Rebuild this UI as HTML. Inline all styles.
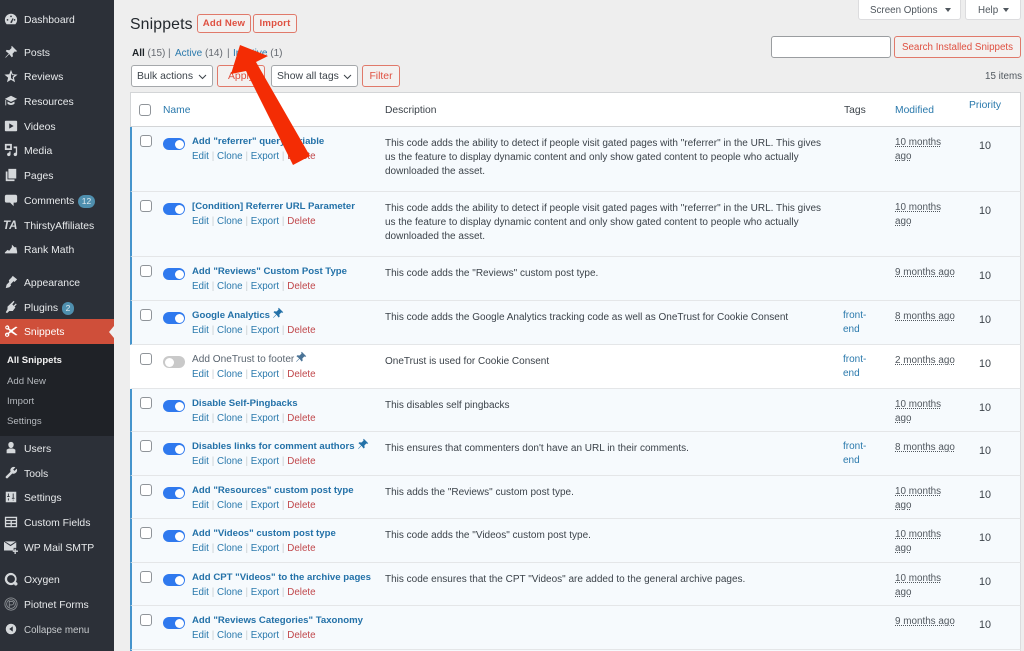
<!DOCTYPE html>
<html><head><meta charset="utf-8"><title>Snippets</title>
<style>
*{box-sizing:border-box}
html{margin:0;padding:0;height:651px;overflow:hidden;background:#eeeeee}
body{margin:0;padding:0;width:1024px;height:651px;overflow:hidden;background:#eeeeee;position:relative;font-family:"Liberation Sans",sans-serif;font-size:10px;color:#3c434a;letter-spacing:0;filter:blur(.35px)}
.a{position:absolute;white-space:nowrap}
#side{position:absolute;left:0;top:0;width:114px;height:651px;background:#2c3038}
.m{position:absolute;left:24px;color:#e8eaec;font-size:10.4px;line-height:14px;white-space:nowrap;margin-top:2px}
.s{position:absolute;left:7px;color:#b4b8bd;font-size:9.6px;line-height:14px;margin-top:4px}
.ic{position:absolute;left:4px;width:14px;height:14px;fill:#d5d8db;margin-top:0}
.bd{display:inline-block;background:#4f8fae;color:#dfeaf0;border-radius:7px;font-size:8.5px;line-height:13px;height:13px;padding:0 3.5px;margin-left:4px;vertical-align:0}
.btn{position:absolute;border:1px solid #e0796a;border-radius:3px;color:#df5040;text-align:center;background:#f3f1f0;white-space:nowrap}
.sel{position:absolute;border:1px solid #a5a8ab;border-radius:3px;background:#fff;color:#3c434a;line-height:21px;padding-left:5px;height:22px;font-size:10.4px;white-space:nowrap}
.sel svg{position:absolute;right:5px;top:8px}
.l{color:#2a79ac}
.r{position:absolute;left:130px;width:891px;background:#f6fafd;border-bottom:1px solid #e4e6e8;border-right:1px solid #dcdcde;border-left:2px solid #4594cc}
.r.off{background:#fff;border-left:2px solid #fff}
.cb{position:absolute;left:8px;top:8px;width:12px;height:12px;border:1px solid #8f9499;border-radius:3px;background:#fff}
.t{position:absolute;left:31px;top:11px;width:22px;height:12px;border-radius:6px;background:#2f79ee}
.t:after{content:"";position:absolute;right:1.5px;top:1.5px;width:9px;height:9px;border-radius:50%;background:#fff}
.off .t{background:#c9c9c9}
.off .t:after{right:auto;left:1.5px}
.n{position:absolute;left:60px;top:8px;font-weight:bold;color:#2371a8;line-height:14px;white-space:nowrap;font-size:9.6px}
.off .n{font-weight:normal;color:#5a6570;font-size:10.1px}
.ac{position:absolute;left:60px;top:23px;line-height:14px;white-space:nowrap;color:#2a79ac;font-size:9.8px}
.ac i{font-style:normal;color:#c9ced2;padding:0 2.8px}
.ac b{font-weight:normal;color:#c0474b}
.d{position:absolute;left:253px;top:10px;line-height:14px;white-space:nowrap;font-size:10px;color:#3c434a}
.tg{position:absolute;left:711px;top:8px;line-height:14px;color:#2a79ac;font-size:10px}
.mo{position:absolute;left:763px;top:9px;line-height:14px;color:#50575e;font-size:9.9px}
.mo u{text-decoration:underline dotted;text-underline-offset:1px}
.p{position:absolute;left:847px;top:12px;line-height:14px;color:#3c434a;font-size:10.8px}
.pin{position:absolute;fill:#2371a8}
.h{line-height:14px;font-size:10.3px}
</style></head>
<body>
<div id="side">
<svg class="ic" style="top:12px" viewBox="0 0 16 16"><path d="M8 2a7 7 0 0 0-7 7c0 2 .8 3.600 2 5h10c1.200-1.400 2-3 2-5a7 7 0 0 0-7-7zM8 4a1 1 0 1 1 0 2 1 1 0 0 1 0-2zM4 8a1 1 0 1 1 0 2 1 1 0 0 1 0-2zm8 0a1 1 0 1 1 0 2 1 1 0 0 1 0-2zM7 12l3-5 .8.500L9 12.500z" fill-rule="evenodd"/></svg>
<div class="m" style="top:12px">Dashboard</div>
<svg class="ic" style="top:45px" viewBox="0 0 16 16"><path d="M9 1l6 6-1.500.8-1-.6L9.800 10l.4 3-1.400 1-2.800-3.600L2 14.500 1.500 14l4-4.200L2 7l1-1.400 3 .4 2.800-2.700-.6-1z"/></svg>
<div class="m" style="top:45px">Posts</div>
<svg class="ic" style="top:69px" viewBox="0 0 16 16"><path d="M8 1l2 5 5.500.4-4.200 3.500 1.300 5.300L8 12.300 3.400 15.200l1.300-5.300L.5 6.400 6 6zM8 4.500v6l2.500 1.500-.7-2.900 2.200-1.900-2.900-.2z" fill-rule="evenodd"/></svg>
<div class="m" style="top:69px">Reviews</div>
<svg class="ic" style="top:94px" viewBox="0 0 16 16"><path d="M8 2L1 5.500 8 9l7-3.500zM4 8.500V11c1 1 2.500 1.500 4 1.500s3-.5 4-1.500V8.500L8 10.500zM1.500 6.500V13h1V7z"/></svg>
<div class="m" style="top:94px">Resources</div>
<svg class="ic" style="top:119px" viewBox="0 0 16 16"><path d="M2 2h12a1 1 0 0 1 1 1v10a1 1 0 0 1-1 1H2a1 1 0 0 1-1-1V3a1 1 0 0 1 1-1zm4 3v6l5-3z" fill-rule="evenodd"/></svg>
<div class="m" style="top:119px">Videos</div>
<svg class="ic" style="top:143px" viewBox="0 0 16 16"><path d="M1 1h8v7H1zM3 3v3h4V3zM11 4h4v9a2 2 0 1 1-1.500-1.900V6H11zM6 9.500h1.500v3.500a2 2 0 1 1-1.500-1.900z" fill-rule="evenodd"/></svg>
<div class="m" style="top:143px">Media</div>
<svg class="ic" style="top:168px" viewBox="0 0 16 16"><path d="M5 1h9v11H5zM2 4h2v9h8v2H2z"/></svg>
<div class="m" style="top:168px">Pages</div>
<svg class="ic" style="top:193px" viewBox="0 0 16 16"><path d="M3 2h10a2 2 0 0 1 2 2v5a2 2 0 0 1-2 2h-2v4l-4-4H3a2 2 0 0 1-2-2V4a2 2 0 0 1 2-2z"/></svg>
<div class="m" style="top:193px">Comments<span class="bd">12</span></div>
<div class="a" style="left:3px;top:219px;font:italic bold 11.5px/14px 'Liberation Sans',sans-serif;color:#d5d8db">TA</div>
<div class="m" style="top:218px">ThirstyAffiliates</div>
<svg class="ic" style="top:242px" viewBox="0 0 16 16"><path d="M1 12l3-3 2 1 3-4v-3l3 3 2 0 1 5 0 2H1z"/></svg>
<div class="m" style="top:242px">Rank Math</div>
<svg class="ic" style="top:275px" viewBox="0 0 16 16"><path d="M10 1l5 4-3 3-1-1-1 1-2.500 2.500L8 12l-2 2-4 1 1-4 3-3-.500-2 3-3z"/></svg>
<div class="m" style="top:275px">Appearance</div>
<svg class="ic" style="top:300px" viewBox="0 0 16 16"><path d="M11 1l1 1-2.500 3L11 6.500 13.500 4l1 1L12 7.500l1 1-3 4H6L3.500 15 2 14l2-3.500V7.500z"/></svg>
<div class="m" style="top:300px">Plugins<span class="bd">2</span></div>
<div style="position:absolute;left:0;top:319px;width:114px;height:25px;background:#cf4f3a"></div>
<div style="position:absolute;left:109px;top:326px;border:6px solid transparent;border-left:0;border-right:5px solid #f0f0f0"></div>
<svg class="ic" style="top:324px;fill:#fff" viewBox="0 0 16 16"><path d="M3.500 1.500a2.500 2.500 0 0 1 2.300 3.500L8 6.500l5.500-3.500 2 .5L9.800 8l5.700 4.500-2 .5L8 9.500 5.800 11a2.500 2.500 0 1 1-1-1L6.500 8 4.800 6.300A2.500 2.500 0 1 1 3.500 1.500zM3.500 3a1 1 0 1 0 0 2 1 1 0 0 0 0-2zm0 8.500a1 1 0 1 0 0 2 1 1 0 0 0 0-2z" fill-rule="evenodd"/></svg>
<div class="m" style="top:324px;color:#fff">Snippets</div>
<div style="position:absolute;left:0;top:344px;width:114px;height:92px;background:#1f2227"></div>
<div class="s" style="top:350px;color:#f2f2f2;font-weight:bold;font-size:9.5px">All Snippets</div>
<div class="s" style="top:371px">Add New</div>
<div class="s" style="top:391px">Import</div>
<div class="s" style="top:411px">Settings</div>
<svg class="ic" style="top:441px" viewBox="0 0 16 16"><path d="M8 1a3 3 0 0 1 3 3.500C11 6.500 9.500 8 8 8S5 6.500 5 4.500A3 3 0 0 1 8 1zM3 10c1-1 2.500-1.500 3-1.500h4c.5 0 2 .5 3 1.500v4H3z"/></svg>
<div class="m" style="top:441px">Users</div>
<svg class="ic" style="top:466px" viewBox="0 0 16 16"><path d="M11 1a4 4 0 0 1 2 .5L10.500 4l1.500 1.500L14.500 3A4 4 0 0 1 9.500 8.500L4 14a1.500 1.500 0 0 1-2-2l5.500-5.500A4 4 0 0 1 11 1z"/></svg>
<div class="m" style="top:466px">Tools</div>
<svg class="ic" style="top:490px" viewBox="0 0 16 16"><path d="M2 2h12v12H2zM4.500 4v3H3.500v1h3V7h-1V4zm0 5.500V12h1V9.500zM10 4v5H9v1h3V9h-1V4zm0 7v1h1v-1z" fill-rule="evenodd"/></svg>
<div class="m" style="top:490px">Settings</div>
<svg class="ic" style="top:515px" viewBox="0 0 16 16"><path d="M1 2h14v12H1zM2.500 3.500v2h11v-2zm0 3.500v2h5V7zm6.500 0v2h4.500V7zM2.500 10.500v2h5v-2zm6.500 0v2h4.500v-2z" fill-rule="evenodd"/></svg>
<div class="m" style="top:515px">Custom Fields</div>
<svg class="ic" style="top:540px" viewBox="0 0 16 16"><path d="M0 2l7.500 5L14 2.500V9h-3v3H0zM1 1.500h12.500L7.500 5.500zM12 10h1.500v2H16v1.500h-2.500V16H12v-2.500H10V12h2z"/></svg>
<div class="m" style="top:540px">WP Mail SMTP</div>
<svg class="ic" style="top:572px" viewBox="0 0 16 16"><path d="M8 1a7 7 0 1 0 3.500 13 2 2 0 1 0 2-2.500A7 7 0 0 0 8 1zm0 2.500a4.500 4.500 0 1 1 0 9 4.500 4.500 0 0 1 0-9z" fill-rule="evenodd"/></svg>
<div class="m" style="top:572px">Oxygen</div>
<svg class="ic" style="top:597px;fill:none;stroke:#8d9196" viewBox="0 0 16 16"><circle cx="8" cy="8" r="7"/><circle cx="8" cy="8" r="5"/><path d="M6 12V5h3a2 2 0 0 1 0 4H6"/></svg>
<div class="m" style="top:597px">Piotnet Forms</div>
<svg class="ic" style="top:622px" viewBox="0 0 16 16"><path d="M8 2a6 6 0 1 1 0 12A6 6 0 0 1 8 2zm2 3L6 8l4 3z" fill-rule="evenodd"/></svg>
<div class="m" style="top:622px;font-size:9.8px;color:#c8cbce">Collapse menu</div>
</div>

<div class="a" style="left:130px;top:14px;font-size:15.8px;line-height:22px;color:#23282d;letter-spacing:.15px">Snippets</div>
<div class="btn" style="left:197px;top:14px;width:54px;height:19px;line-height:18px;font-size:9.6px;font-weight:bold;letter-spacing:.2px">Add New</div>
<div class="btn" style="left:253px;top:14px;width:44px;height:19px;line-height:18px;font-size:9.6px;font-weight:bold;letter-spacing:.2px">Import</div>

<div class="a" style="left:132px;top:47px;line-height:14px;font-size:10px;color:#646970"><b style="color:#1d2327">All</b> (15)</div>
<div class="a" style="left:168px;top:47px;line-height:14px;color:#646970">|</div>
<div class="a" style="left:175px;top:47px;line-height:14px;color:#646970"><span class="l">Active</span> (14)</div>
<div class="a" style="left:227px;top:47px;line-height:14px;color:#646970">|</div>
<div class="a" style="left:233px;top:47px;line-height:14px;color:#646970"><span class="l">Inactive</span> (1)</div>

<div class="sel" style="left:131px;top:65px;width:82px">Bulk actions<svg width="9" height="6" viewBox="0 0 9 6"><path d="M1 1l3.500 3.500L8 1" fill="none" stroke="#3c434a" stroke-width="1"/></svg></div>
<div class="btn" style="left:217px;top:65px;width:48px;height:22px;line-height:21px;font-size:10.4px">Apply</div>
<div class="sel" style="left:271px;top:65px;width:87px">Show all tags<svg width="9" height="6" viewBox="0 0 9 6"><path d="M1 1l3.500 3.500L8 1" fill="none" stroke="#3c434a" stroke-width="1"/></svg></div>
<div class="btn" style="left:362px;top:65px;width:38px;height:22px;line-height:21px;font-size:10.4px">Filter</div>

<div style="position:absolute;left:858px;top:-6px;width:103px;height:26px;background:#fff;border:1px solid #dcdcde;border-radius:3px"></div>
<div class="a" style="left:870px;top:4px;line-height:14px;font-size:9.8px;color:#50575e">Screen Options</div>
<div style="position:absolute;left:945px;top:8px;border:3px solid transparent;border-top:4px solid #50575e;border-bottom:0"></div>
<div style="position:absolute;left:965px;top:-6px;width:56px;height:26px;background:#fff;border:1px solid #dcdcde;border-radius:3px"></div>
<div class="a" style="left:978px;top:4px;line-height:14px;font-size:9.8px;color:#50575e">Help</div>
<div style="position:absolute;left:1003px;top:8px;border:3px solid transparent;border-top:4px solid #50575e;border-bottom:0"></div>

<div style="position:absolute;left:771px;top:36px;width:120px;height:22px;background:#fff;border:1px solid #9a9da0;border-radius:3px"></div>
<div class="btn" style="left:894px;top:36px;width:127px;height:22px;line-height:21px;font-size:9.8px">Search Installed Snippets</div>
<div class="a" style="left:985px;top:70px;line-height:14px;font-size:9.8px;color:#50575e">15 items</div>

<div style="position:absolute;left:130px;top:92px;width:891px;height:35px;background:#fff;border:1px solid #d3d5d7"></div>
<div style="position:absolute;left:139px;top:104px;width:12px;height:12px;border:1px solid #8f9499;border-radius:3px;background:#fff"></div>
<div class="a l h" style="left:163px;top:104px">Name</div>
<div class="a h" style="left:385px;top:104px">Description</div>
<div class="a h" style="left:844px;top:104px">Tags</div>
<div class="a l h" style="left:895px;top:104px">Modified</div>
<div class="a l h" style="left:969px;top:99px">Priority</div>

<div class="r" style="top:127px;height:65px"><div class="cb"></div><div class="t"></div><div class="n">Add "referrer" query variable</div><div class="ac">Edit<i>|</i>Clone<i>|</i>Export<i>|</i><b>Delete</b></div><div class="d">This code adds the ability to detect if people visit gated pages with "referrer" in the URL. This gives<br>us the feature to display dynamic content and only show gated content to people who actually<br>downloaded the asset.</div><div class="mo"><u>10 months</u><br><u>ago</u></div><div class="p">10</div></div>

<div class="r" style="top:192px;height:65px"><div class="cb"></div><div class="t"></div><div class="n">[Condition] Referrer URL Parameter</div><div class="ac">Edit<i>|</i>Clone<i>|</i>Export<i>|</i><b>Delete</b></div><div class="d">This code adds the ability to detect if people visit gated pages with "referrer" in the URL. This gives<br>us the feature to display dynamic content and only show gated content to people who actually<br>downloaded the asset.</div><div class="mo"><u>10 months</u><br><u>ago</u></div><div class="p">10</div></div>

<div class="r" style="top:257px;height:44px"><div class="cb"></div><div class="t"></div><div class="n">Add "Reviews" Custom Post Type</div><div class="ac">Edit<i>|</i>Clone<i>|</i>Export<i>|</i><b>Delete</b></div><div class="d">This code adds the "Reviews" custom post type.</div><div class="mo"><u>9 months ago</u></div><div class="p">10</div></div>

<div class="r" style="top:301px;height:44px"><div class="cb"></div><div class="t"></div><div class="n">Google Analytics</div><svg class="pin" style="left:140px;top:6px" width="12" height="12" viewBox="0 0 16 16"><path d="M9 1l6 6-1.500.8-1-.6L9.800 10l.4 3-1.400 1-2.800-3.600L2 14.500 1.500 14l4-4.200L2 7l1-1.400 3 .4 2.800-2.700-.6-1z"/></svg><div class="ac">Edit<i>|</i>Clone<i>|</i>Export<i>|</i><b>Delete</b></div><div class="d">This code adds the Google Analytics tracking code as well as OneTrust for Cookie Consent</div><div class="tg">front-<br>end</div><div class="mo"><u>8 months ago</u></div><div class="p">10</div></div>

<div class="r off" style="top:345px;height:44px"><div class="cb"></div><div class="t"></div><div class="n">Add OneTrust to footer</div><svg class="pin" style="left:163px;top:6px;fill:#4a7396" width="12" height="12" viewBox="0 0 16 16"><path d="M9 1l6 6-1.500.8-1-.6L9.800 10l.4 3-1.400 1-2.800-3.600L2 14.500 1.500 14l4-4.200L2 7l1-1.400 3 .4 2.800-2.700-.6-1z"/></svg><div class="ac">Edit<i>|</i>Clone<i>|</i>Export<i>|</i><b>Delete</b></div><div class="d">OneTrust is used for Cookie Consent</div><div class="tg">front-<br>end</div><div class="mo"><u>2 months ago</u></div><div class="p">10</div></div>

<div class="r" style="top:389px;height:43px"><div class="cb"></div><div class="t"></div><div class="n">Disable Self-Pingbacks</div><div class="ac">Edit<i>|</i>Clone<i>|</i>Export<i>|</i><b>Delete</b></div><div class="d">This disables self pingbacks</div><div class="mo"><u>10 months</u><br><u>ago</u></div><div class="p">10</div></div>

<div class="r" style="top:432px;height:44px"><div class="cb"></div><div class="t"></div><div class="n">Disables links for comment authors</div><svg class="pin" style="left:225px;top:6px" width="12" height="12" viewBox="0 0 16 16"><path d="M9 1l6 6-1.500.8-1-.6L9.800 10l.4 3-1.400 1-2.800-3.600L2 14.500 1.500 14l4-4.200L2 7l1-1.400 3 .4 2.800-2.700-.6-1z"/></svg><div class="ac">Edit<i>|</i>Clone<i>|</i>Export<i>|</i><b>Delete</b></div><div class="d">This ensures that commenters don't have an URL in their comments.</div><div class="tg">front-<br>end</div><div class="mo"><u>8 months ago</u></div><div class="p">10</div></div>

<div class="r" style="top:476px;height:43px"><div class="cb"></div><div class="t"></div><div class="n">Add "Resources" custom post type</div><div class="ac">Edit<i>|</i>Clone<i>|</i>Export<i>|</i><b>Delete</b></div><div class="d">This adds the "Reviews" custom post type.</div><div class="mo"><u>10 months</u><br><u>ago</u></div><div class="p">10</div></div>

<div class="r" style="top:519px;height:44px"><div class="cb"></div><div class="t"></div><div class="n">Add "Videos" custom post type</div><div class="ac">Edit<i>|</i>Clone<i>|</i>Export<i>|</i><b>Delete</b></div><div class="d">This code adds the "Videos" custom post type.</div><div class="mo"><u>10 months</u><br><u>ago</u></div><div class="p">10</div></div>

<div class="r" style="top:563px;height:43px"><div class="cb"></div><div class="t"></div><div class="n">Add CPT "Videos" to the archive pages</div><div class="ac">Edit<i>|</i>Clone<i>|</i>Export<i>|</i><b>Delete</b></div><div class="d">This code ensures that the CPT "Videos" are added to the general archive pages.</div><div class="mo"><u>10 months</u><br><u>ago</u></div><div class="p">10</div></div>

<div class="r" style="top:606px;height:44px"><div class="cb"></div><div class="t"></div><div class="n">Add "Reviews Categories" Taxonomy</div><div class="ac">Edit<i>|</i>Clone<i>|</i>Export<i>|</i><b>Delete</b></div><div class="mo"><u>9 months ago</u></div><div class="p">10</div></div>

<div class="r" style="top:650px;height:1px;border-bottom:0"></div>

<svg style="position:absolute;left:0;top:0" width="1024" height="651"><polygon points="240,45 268,56 256,62 310,156 293,165 246,71 231,74" fill="#f42c04"/></svg>
</body></html>
